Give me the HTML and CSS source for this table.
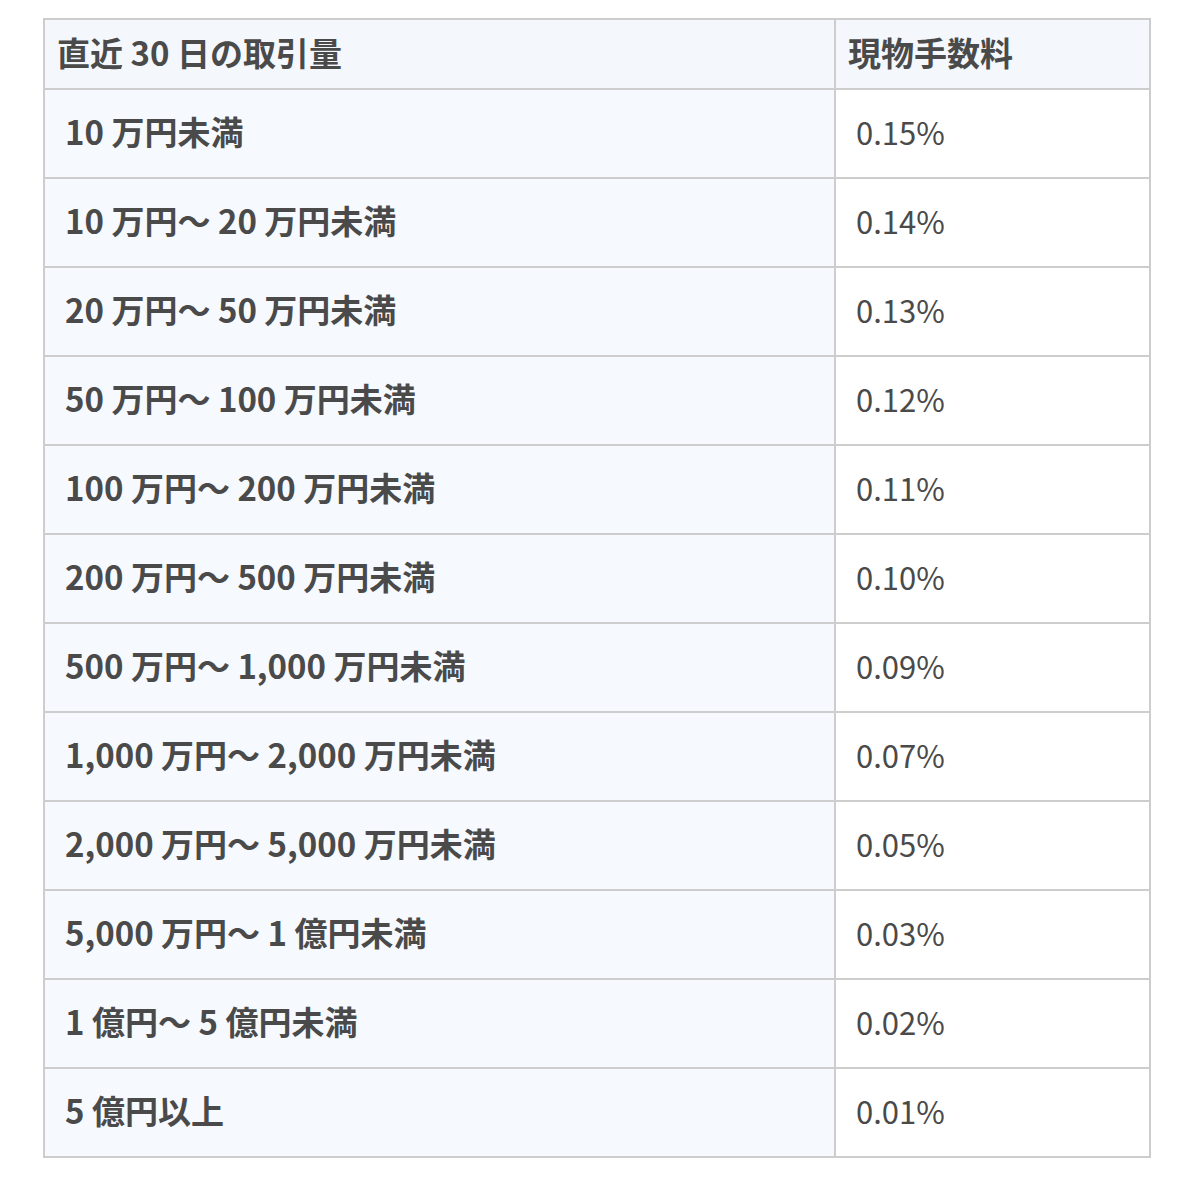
FILE: index.html
```html
<!DOCTYPE html>
<html lang="ja">
<head>
<meta charset="utf-8">
<link rel="stylesheet" href="styles.css">
</head>
<body>
<div class="wrap">
<table class="fees">
<thead>
<tr><th class="c1">直近 30 日の取引量</th><th class="c2">現物手数料</th></tr>
</thead>
<tbody>
<tr><td class="c1">10 万円未満</td><td class="c2">0.15%</td></tr>
<tr><td class="c1">10 万円～ 20 万円未満</td><td class="c2">0.14%</td></tr>
<tr><td class="c1">20 万円～ 50 万円未満</td><td class="c2">0.13%</td></tr>
<tr><td class="c1">50 万円～ 100 万円未満</td><td class="c2">0.12%</td></tr>
<tr><td class="c1">100 万円～ 200 万円未満</td><td class="c2">0.11%</td></tr>
<tr><td class="c1">200 万円～ 500 万円未満</td><td class="c2">0.10%</td></tr>
<tr><td class="c1">500 万円～ 1,000 万円未満</td><td class="c2">0.09%</td></tr>
<tr><td class="c1">1,000 万円～ 2,000 万円未満</td><td class="c2">0.07%</td></tr>
<tr><td class="c1">2,000 万円～ 5,000 万円未満</td><td class="c2">0.05%</td></tr>
<tr><td class="c1">5,000 万円～ 1 億円未満</td><td class="c2">0.03%</td></tr>
<tr><td class="c1">1 億円～ 5 億円未満</td><td class="c2">0.02%</td></tr>
<tr><td class="c1">5 億円以上</td><td class="c2">0.01%</td></tr>
</tbody>
</table>
</div>
</body>
</html>
```
FILE: styles.css
```css
html, body {
  margin: 0;
  padding: 0;
  background: #ffffff;
}
body {
  font-family: "Noto Sans CJK JP", "Noto Sans", sans-serif;
  color: #4a4a4a;
}
.wrap {
  padding: 18px 0 0 43px;
}
.fees {
  border-collapse: collapse;
  width: 1108px;
  table-layout: fixed;
  border: 2px solid #cdcdcd;
}
.fees th, .fees td {
  border: 2px solid #cdcdcd;
  text-align: left;
  vertical-align: middle;
  font-size: 33px;
  line-height: 1.2;
  box-sizing: border-box;
}
.fees th {
  height: 70px;
  padding: 0 12px 3px;
  font-weight: 700;
  background: #f4f7fc;
}
.fees td {
  height: 89px;
  padding: 0 20px 3px;
}
.fees th.c1 { width: 791px; }
.fees td.c1 {
  font-weight: 700;
  background: #f6f9fd;
}
.fees td.c2 {
  font-size: 31px;
  font-weight: 400;
  background: #ffffff;
}
```
